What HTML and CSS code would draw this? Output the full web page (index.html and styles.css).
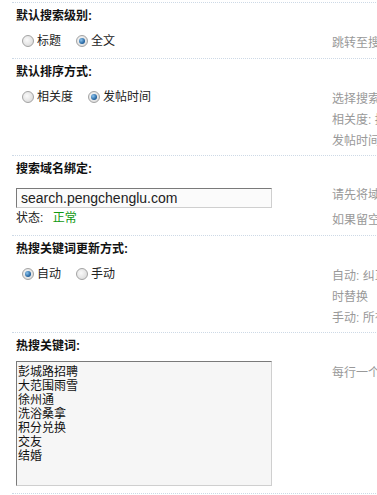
FILE: index.html
```html
<!DOCTYPE html>
<html lang="zh-CN">
<head>
    <meta charset="UTF-8">
    <title>搜索设置</title>
    <link rel="stylesheet" href="styles.css">
</head>
<body>
    <div class="container">
        <table class="tb">
            <tr>
                <td colspan="2" class="td27">默认搜索级别:</td>
            </tr>
            <tr>
                <td class="rowform">
                    <div class="radios">
                        <label class="opt"><span class="radio"></span>标题</label>
                        <label class="opt"><span class="radio checked"></span>全文</label>
                    </div>
                </td>
                <td class="tips2">跳转至搜索页面时默认的搜索级别</td>
            </tr>

            <tr>
                <td colspan="2" class="td27">默认排序方式:</td>
            </tr>
            <tr>
                <td class="rowform">
                    <div class="radios">
                        <label class="opt"><span class="radio"></span>相关度</label>
                        <label class="opt"><span class="radio checked"></span>发帖时间</label>
                    </div>
                </td>
                <td class="tips2">选择搜索结果的默认排序方式<br>相关度: 按关键词匹配程度排序<br>发帖时间: 按帖子发表时间排序</td>
            </tr>

            <tr>
                <td colspan="2" class="td27">搜索域名绑定:</td>
            </tr>
            <tr>
                <td class="rowform">
                    <input class="txt" type="text" value="search.pengchenglu.com">
                    <div class="status">状态: <span class="ok">正常</span></div>
                </td>
                <td class="tips2 wide">请先将域名解析到本服务器<br>如果留空则不启用域名绑定</td>
            </tr>

            <tr>
                <td colspan="2" class="td27">热搜关键词更新方式:</td>
            </tr>
            <tr>
                <td class="rowform">
                    <div class="radios">
                        <label class="opt"><span class="radio checked"></span>自动</label>
                        <label class="opt"><span class="radio"></span>手动</label>
                    </div>
                </td>
                <td class="tips2">自动: 纠正并按搜索频率定<br>时替换<br>手动: 所有关键词由管理员设置</td>
            </tr>

            <tr>
                <td colspan="2" class="td27">热搜关键词:</td>
            </tr>
            <tr>
                <td class="rowform">
                    <textarea class="tarea">彭城路招聘
大范围雨雪
徐州通
洗浴桑拿
积分兑换
交友
结婚</textarea>
                </td>
                <td class="tips2">每行一个关键词</td>
            </tr>
            <tr>
                <td colspan="2" class="td27 last"></td>
            </tr>
        </table>
    </div>
</body>
</html>
```

FILE: styles.css
```css
html, body {
    margin: 0;
    overflow: hidden;
}
body {
    background: #fff;
    font-family: "Liberation Sans", "Noto Sans CJK SC", sans-serif;
    font-size: 12px;
    color: #222;
}
.container {
    padding: 2px 0 0 12px;
}
.tb {
    border-collapse: separate;
    border-spacing: 0;
    width: 640px;
}
.tb td {
    padding: 0 0 0 4px;
    vertical-align: top;
}
.td27 {
    border-top: 1px dotted #cdd9e6;
    padding-top: 4px !important;
    padding-bottom: 2px !important;
    line-height: 18px;
    font-weight: bold;
    color: #111;
}
.td27.last {
    height: 20px;
}
.rowform {
    width: 312px;
    padding-top: 4px !important;
    padding-bottom: 7px !important;
    line-height: 20px;
}
.tips2 {
    padding-top: 6px !important;
    padding-bottom: 3px !important;
    line-height: 21px;
    color: #999;
    white-space: nowrap;
}
.tips2.wide {
    padding-top: 3px !important;
    padding-bottom: 0 !important;
    line-height: 25px;
}
.radios {
    display: flex;
    padding-left: 6px;
}
.opt {
    display: flex;
    align-items: center;
    margin-right: 15px;
    color: #222;
}
.radio {
    position: relative;
    box-sizing: border-box;
    width: 12px;
    height: 12px;
    margin-right: 3px;
    border: 1px solid #a3a3a3;
    border-radius: 50%;
    background: radial-gradient(circle at 40% 40%, #fafafa, #d4d4d4);
}
.radio.checked::after {
    content: "";
    position: absolute;
    left: 2px;
    top: 2px;
    width: 6px;
    height: 6px;
    border-radius: 50%;
    background: radial-gradient(circle at 35% 35%, #8cc4ee, #1b5c99 70%);
}
.txt {
    display: block;
    box-sizing: border-box;
    width: 256px;
    height: 20px;
    margin: 4px 0 0;
    padding: 0 4px;
    border: 1px solid;
    border-color: #7a7a7a #cfcfcf #cfcfcf #7a7a7a;
    background: #fbfbfb;
    font-family: "Liberation Sans", sans-serif;
    font-size: 14px;
    color: #222;
}
.status {
    line-height: 20px;
}
.ok {
    margin-left: 6px;
    color: #119911;
}
.tarea {
    display: block;
    box-sizing: border-box;
    width: 256px;
    height: 125px;
    margin: 0;
    padding: 2px 1px;
    border: 1px solid;
    border-color: #7a7a7a #cfcfcf #cfcfcf #7a7a7a;
    background: #f6f6f6;
    font-family: "Noto Sans CJK SC", sans-serif;
    font-size: 12px;
    line-height: 14px;
    color: #111;
    resize: none;
}
```
